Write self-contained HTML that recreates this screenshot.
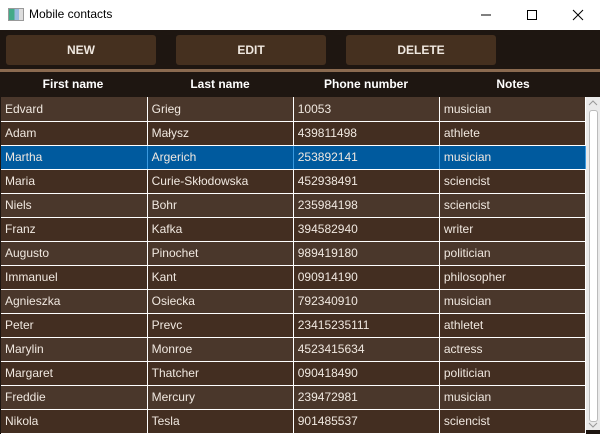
<!DOCTYPE html>
<html><head><style>
*{margin:0;padding:0;box-sizing:border-box}
body{width:600px;height:430px;overflow:hidden;background:#1e1611;font-family:"Segoe UI","Liberation Sans",sans-serif;position:relative}
.title{position:absolute;left:0;top:0;width:600px;height:30px;background:#fff;font-size:12px;color:#000}
.title .t{position:absolute;left:29px;top:7px}
.icon{position:absolute;left:8px;top:8px;width:16px;height:13px;border:1px solid #999;background:linear-gradient(90deg,#4a8 0 40%,#9bd 40% 70%,#ddd 70%)}
.btn{position:absolute;top:35px;height:30px;width:150px;background:#45301f;border-radius:3px;color:#f0e8e0;font-weight:bold;font-size:12px;text-align:center;line-height:30px}
.line{position:absolute;left:0;top:69px;width:600px;height:3px;background:#8a6a50}
.hdr{position:absolute;top:72px;left:0;width:586px;height:25px;color:#fff;font-weight:bold;font-size:12px}
.hdr div{position:absolute;top:5px;text-align:center;width:146px}
table{position:absolute;left:1px;top:97px;border-collapse:collapse;width:585px;table-layout:fixed}
td{height:24px;border-bottom:1px solid #fff;border-right:1px solid #fff;color:#f0e8e0;font-size:12px;padding:0 0 0 4px;white-space:nowrap;overflow:hidden}
tr:nth-child(odd) td{background:#4a372b}
tr:nth-child(even) td{background:#432e21}
tr.sel td{background:#005a9e;border-right-color:#3a9ae0}
.sb{position:absolute;left:586px;top:97px;width:14px;height:333px;background:#eaeaea}
.thumb{position:absolute;left:589px;top:110px;width:9px;height:312px;background:#fff;border:1px solid #bbb;border-radius:3px}
</style></head><body>
<div class="title"><div class="icon"></div><span class="t">Mobile contacts</span>
<svg style="position:absolute;left:480px;top:8px" width="110" height="14"><line x1="1" y1="7" x2="11" y2="7" stroke="#000"/><rect x="47.5" y="2.5" width="9" height="9" fill="none" stroke="#000"/><path d="M93 2L103 12M103 2L93 12" stroke="#000"/></svg></div>
<div class="btn" style="left:6px">NEW</div>
<div class="btn" style="left:176px">EDIT</div>
<div class="btn" style="left:346px">DELETE</div>
<div class="line"></div>
<div class="hdr"><div style="left:0">First name</div><div style="left:147px">Last name</div><div style="left:293px">Phone number</div><div style="left:440px">Notes</div></div>
<table>
<tr><td>Edvard</td><td>Grieg</td><td>10053</td><td>musician</td></tr>
<tr><td>Adam</td><td>Małysz</td><td>439811498</td><td>athlete</td></tr>
<tr class="sel"><td>Martha</td><td>Argerich</td><td>253892141</td><td>musician</td></tr>
<tr><td>Maria</td><td>Curie-Skłodowska</td><td>452938491</td><td>sciencist</td></tr>
<tr><td>Niels</td><td>Bohr</td><td>235984198</td><td>sciencist</td></tr>
<tr><td>Franz</td><td>Kafka</td><td>394582940</td><td>writer</td></tr>
<tr><td>Augusto</td><td>Pinochet</td><td>989419180</td><td>politician</td></tr>
<tr><td>Immanuel</td><td>Kant</td><td>090914190</td><td>philosopher</td></tr>
<tr><td>Agnieszka</td><td>Osiecka</td><td>792340910</td><td>musician</td></tr>
<tr><td>Peter</td><td>Prevc</td><td>23415235111</td><td>athletet</td></tr>
<tr><td>Marylin</td><td>Monroe</td><td>4523415634</td><td>actress</td></tr>
<tr><td>Margaret</td><td>Thatcher</td><td>090418490</td><td>politician</td></tr>
<tr><td>Freddie</td><td>Mercury</td><td>239472981</td><td>musician</td></tr>
<tr><td>Nikola</td><td>Tesla</td><td>901485537</td><td>sciencist</td></tr>
</table>
<div class="sb"></div><div class="thumb"></div>
<svg style="position:absolute;left:588px;top:99px" width="10" height="8"><path d="M1 6L5 2L9 6" fill="none" stroke="#999"/></svg>
<svg style="position:absolute;left:588px;top:421px" width="10" height="8"><path d="M1 2L5 6L9 2" fill="none" stroke="#999"/></svg>
</body></html>
